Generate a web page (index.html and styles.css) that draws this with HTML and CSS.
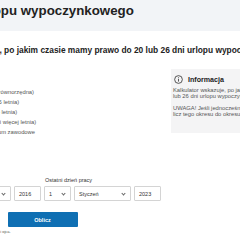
FILE: index.html
```html
<!DOCTYPE html>
<html lang="pl">
<head>
<meta charset="utf-8">
<title>Kalkulator urlopu wypoczynkowego</title>
<link rel="stylesheet" href="styles.css">
</head>
<body>
<header class="top">
  <h1 class="title">Kalkulator urlopu wypoczynkowego</h1>
</header>
<main class="main">
  <h2 class="lead">Sprawdź, po jakim czasie mamy prawo do 20 lub 26 dni urlopu wypoczynkowego?</h2>
  <div class="cols">
    <form class="form">
      <ul class="options">
        <li class="opt"><span class="radio"></span><span class="opt-text">Zasadnicza szkoła zawodowa (lub równorzędna)</span></li>
        <li class="opt"><span class="radio"></span><span class="opt-text">Średnia szkoła zawodowa (4 bądź 5 letnia)</span></li>
        <li class="opt"><span class="radio"></span><span class="opt-text">Średnia szkoła ogólnokształcąca (4 letnia)</span></li>
        <li class="opt"><span class="radio"></span><span class="opt-text">Szkoła policealna lub technikum (5 i więcej letnia)</span></li>
        <li class="opt"><span class="radio"></span><span class="opt-text">Szkoła wyższa lub policealne studium zawodowe</span></li>
      </ul>
      <div class="dates">
        <div class="date-group">
          <span class="date-label">Pierwszy dzień pracy</span>
          <div class="fields">
            <div class="field sel day">1<span class="chev"></span></div>
            <div class="field sel month">Styczeń<span class="chev"></span></div>
            <div class="field year">2016</div>
          </div>
        </div>
        <div class="date-group">
          <span class="date-label">Ostatni dzień pracy</span>
          <div class="fields">
            <div class="field sel day">1<span class="chev"></span></div>
            <div class="field sel month">Styczeń<span class="chev"></span></div>
            <div class="field year">2023</div>
          </div>
        </div>
      </div>
      <div class="actions"><button type="button" class="btn">Oblicz</button></div>
      <p class="note">Wymiar urlopu ustala się osobno dla matki i ojca.</p>
    </form>
    <aside class="info">
      <div class="info-head">
        <svg class="info-icon" viewBox="0 0 10 10" width="9" height="9"><circle cx="5" cy="5" r="4.3" fill="none" stroke="#333" stroke-width="0.9"/><rect x="4.55" y="4.3" width="0.9" height="3" fill="#333"/><rect x="4.55" y="2.6" width="0.9" height="0.9" fill="#333"/></svg>
        <span class="info-title">Informacja</span>
      </div>
      <p class="info-text">Kalkulator wskazuje, po jakim czasie mamy prawo do 20<br>lub 26 dni urlopu wypoczynkowego.</p>
      <p class="info-text">UWAGA! Jeśli jednocześnie pracowałeś i uczyłeś się, nie<br>licz tego okresu do okresu zatrudnienia.</p>
    </aside>
  </div>
</main>
</body>
</html>
```
FILE: styles.css
```css
* { box-sizing: border-box; }
html, body { margin: 0; padding: 0; }
body {
  width: 240px;
  height: 240px;
  overflow: hidden;
  background: #fff;
  font-family: "Liberation Sans", Arial, sans-serif;
  color: #222;
}
.top {
  background: #f2f4f7;
  height: 31px;
  padding-top: 4px;
}
.title {
  margin: 0 0 0 -93px;
  font-size: 13.3px;
  line-height: 13px;
  font-weight: 700;
  color: #222;
  white-space: nowrap;
}
.main { width: 500px; }
.lead {
  margin: 14px 0 0 -35px;
  font-size: 8.4px;
  line-height: 10px;
  font-weight: 700;
  color: #222;
  white-space: nowrap;
}
.cols {
  display: flex;
  margin-top: 14px;
  margin-left: -76px;
  align-items: flex-start;
}
.form {
  width: 237px;
  flex: none;
  margin: 0;
}
.options {
  list-style: none;
  margin: 18px 0 0 -24px;
  padding: 0;
}
.opt {
  display: flex;
  align-items: center;
  gap: 3px;
  height: 10px;
  font-size: 5.8px;
  color: #555;
  white-space: nowrap;
}
.radio {
  width: 6px;
  height: 6px;
  border: 1px solid #999;
  border-radius: 50%;
  flex: none;
}
.dates {
  display: flex;
  gap: 3px;
  margin-top: 40px;
}
.date-group {
  display: flex;
  flex-direction: column;
  gap: 3px;
}
.date-label {
  font-size: 5.5px;
  line-height: 6px;
  color: #333;
  padding-left: 1px;
}
.fields {
  display: flex;
  gap: 3px;
}
.field {
  height: 15px;
  border: 1px solid #d4d4d4;
  border-radius: 1px;
  font-size: 5.5px;
  color: #333;
  display: flex;
  align-items: center;
  padding-left: 4px;
}
.day, .year { width: 27px; }
.month { width: 57px; }
.sel { justify-content: space-between; padding-right: 5px; }
.chev {
  width: 3px;
  height: 3px;
  border-right: 0.8px solid #666;
  border-bottom: 0.8px solid #666;
  transform: rotate(45deg);
  margin-top: -1px;
}
.actions {
  display: flex;
  justify-content: center;
  margin-top: 11px;
}
.btn {
  width: 70px;
  height: 15px;
  background: #0f6fb3;
  color: #fff;
  border: 0;
  border-radius: 1px;
  font-family: inherit;
  font-size: 5.5px;
  font-weight: 700;
  padding: 0;
}
.note {
  margin: 2px 0 0;
  font-size: 4px;
  color: #555;
  white-space: nowrap;
}
.info {
  margin-left: 10px;
  width: 110px;
  flex: none;
  background: #f4f4f5;
  padding: 6px 2px 15px 2px;
}
.info-head {
  display: flex;
  align-items: center;
  gap: 5px;
  margin-left: 1px;
}
.info-icon { display: block; }
.info-title {
  font-size: 7.1px;
  font-weight: 700;
  color: #222;
}
.info-text {
  margin: 4px 0 0;
  font-size: 5.8px;
  line-height: 5.8px;
  color: #555;
  white-space: nowrap;
}
.info-text + .info-text { margin-top: 6.5px; }
```
